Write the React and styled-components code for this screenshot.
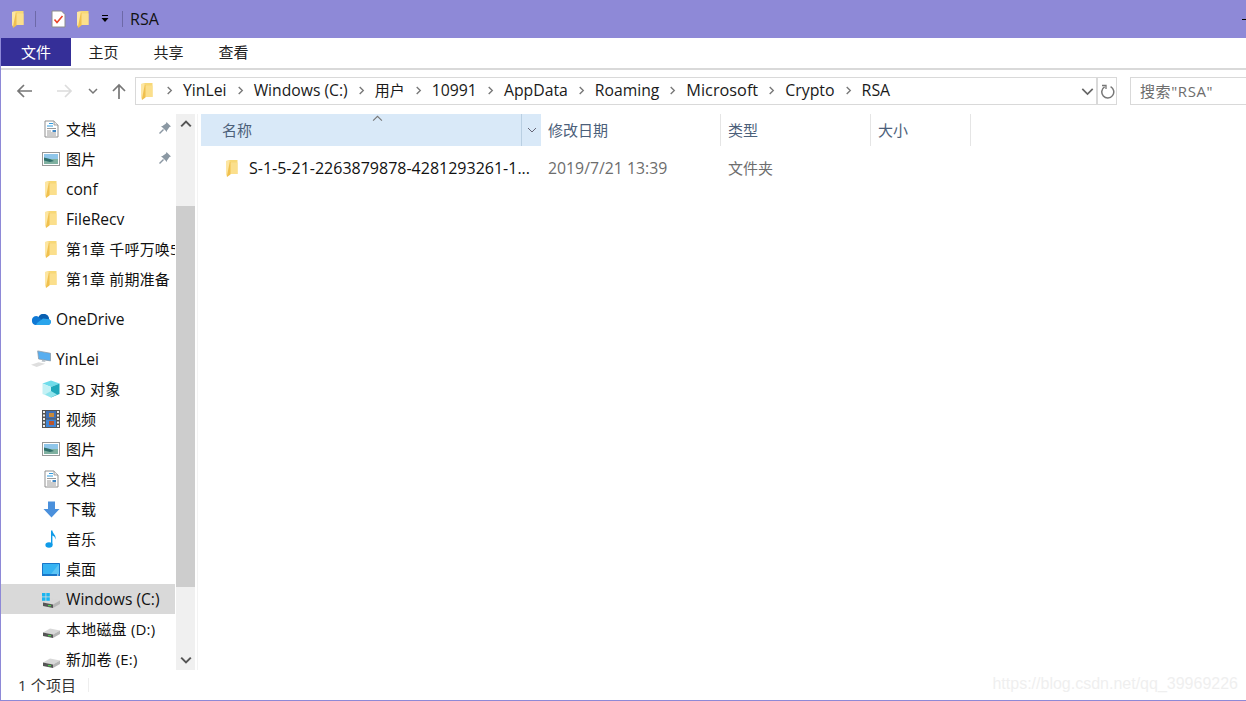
import React from 'react'
import styled, { createGlobalStyle } from 'styled-components'

const GlobalStyle = createGlobalStyle`
  html, body {
    margin: 0;
    padding: 0;
    background: #fff;
    overflow: hidden;
  }
  #root {
    height: 701px;
  }
`

const Window = styled.div`
  position: relative;
  width: 1246px;
  height: 701px;
  box-sizing: border-box;
  border-left: 1px solid #8e89d7;
  border-bottom: 1px solid #8e89d7;
  display: flex;
  flex-direction: column;
  overflow: hidden;
  color: #000;
  font-family: "Open Sans", "Noto Sans CJK SC", sans-serif;
  font-size: 15px;
`

// the CJK glyphs sit lower than the Latin ones, so nudge them up a bit
const Cjk = styled.span`
  padding-bottom: ${p => p.$lift || 2}px;
  letter-spacing: ${p => p.$track || 0}px;
  white-space: nowrap;
`

const Latin = styled.span`
  font-size: ${p => p.$size || 15.6}px;
  padding-bottom: 1px;
  white-space: nowrap;
`

const TitleBar = styled.div`
  height: 38px;
  margin-left: -1px;
  background: #8e89d7;
  display: flex;
  align-items: center;
  flex: none;
`

const TitleIcons = styled.div`
  display: flex;
  align-items: center;
  padding-left: 12px;
  width: 130px;
  box-sizing: border-box;
  flex: none;
`

const TitleSep = styled.span`
  width: 1px;
  height: 16px;
  background: #6d69a8;
  margin: 0 ${p => p.$right || 0}px 0 ${p => p.$left || 0}px;
`

const Spacer = styled.span`
  width: ${p => p.$w}px;
  flex: none;
`

const TitleText = styled.span`
  font-size: 16px;
  color: #111;
  flex: 1;
`

const Minimize = styled.span`
  width: 4px;
  height: 1px;
  background: #000;
`

const Tabs = styled.div`
  height: 32px;
  flex: none;
  display: flex;
  box-sizing: border-box;
  border-bottom: 2px solid #d9d9d9;
`

const FileTab = styled.div`
  width: 70px;
  height: 28px;
  background: #352f98;
  color: #fff;
  display: flex;
  align-items: center;
  justify-content: center;
`

const Tab = styled.div`
  width: 65px;
  height: 28px;
  display: flex;
  align-items: center;
  justify-content: center;
  color: #222;
`

const NavBar = styled.div`
  height: 44px;
  flex: none;
  display: flex;
  padding-top: 7px;
  box-sizing: border-box;
`

const NavButtons = styled.div`
  width: 134px;
  flex: none;
  display: flex;
  align-items: center;
  height: 28px;
  padding-left: 15px;
  box-sizing: border-box;
`

const AddressBox = styled.div`
  width: 962px;
  height: 28px;
  box-sizing: border-box;
  border: 1px solid #d9d9d9;
  display: flex;
  align-items: center;
  padding-left: 5px;
  flex: none;
`

const Crumbs = styled.div`
  display: flex;
  align-items: center;
  flex: 1;
  color: #1a1a1a;
  padding-left: 3px;
  padding-bottom: 1px;
`

const CrumbSep = styled.span`
  display: flex;
  margin: 0 9px;
`

const AddressEnd = styled.div`
  width: 20px;
  height: 28px;
  box-sizing: border-box;
  border: 1px solid #d9d9d9;
  display: flex;
  align-items: center;
  justify-content: center;
  flex: none;
`

const SearchBox = styled.div`
  margin-left: 13px;
  flex: 1;
  height: 28px;
  box-sizing: border-box;
  border: 1px solid #d9d9d9;
  border-right: none;
  padding-left: 9px;
  display: flex;
  align-items: center;
  color: #6d6d6d;
  white-space: nowrap;
`

const Body = styled.div`
  flex: 1;
  display: flex;
  min-height: 0;
`

const Sidebar = styled.div`
  width: 175px;
  flex: none;
  overflow: hidden;
  box-sizing: border-box;
  padding-right: 1px;
`

const NavRow = styled.div`
  height: 30px;
  display: flex;
  align-items: center;
  background: ${p => (p.$active ? '#d9d9d9' : 'transparent')};
  margin-top: ${p => p.$top || 0}px;
  padding-left: ${p => p.$indent || 40}px;
  box-sizing: border-box;
  position: relative;
  overflow: hidden;
  white-space: nowrap;
  color: #111;
`

const NavIcon = styled.span`
  width: 20px;
  height: 20px;
  margin-right: 5px;
  display: flex;
  align-items: center;
  justify-content: center;
  flex: none;
`

const Pin = styled.span`
  position: absolute;
  right: 3px;
  top: 7px;
  display: flex;
`

const ScrollBar = styled.div`
  width: 19px;
  flex: none;
  background: #f0f0f0;
  display: flex;
  flex-direction: column;
  align-items: center;
`

const ScrollBtn = styled.div`
  height: 20px;
  flex: none;
  display: flex;
  align-items: center;
  justify-content: center;
`

const ScrollTrack = styled.div`
  flex: 1;
  width: 100%;
  padding-top: 72px;
  padding-bottom: 63px;
  box-sizing: border-box;
  display: flex;
`

const ScrollThumb = styled.div`
  flex: 1;
  background: #cdcdcd;
`

const Content = styled.div`
  flex: 1;
  margin-left: 2px;
  border-left: 1px solid #f3f3f3;
  padding-left: 3px;
  position: relative;
`

const HeaderRow = styled.div`
  display: flex;
  height: 32px;
`

const NameHeader = styled.div`
  position: relative;
  width: 340px;
  background: #d9e9f8;
  display: flex;
  align-items: center;
  padding-left: 21px;
  box-sizing: border-box;
  color: #4c607a;
`

const SortCaret = styled.span`
  position: absolute;
  left: 171px;
  top: -1px;
  display: flex;
`

const HeaderMenu = styled.span`
  position: absolute;
  right: 0;
  top: 0;
  bottom: 0;
  width: 19px;
  border-left: 1px solid #b9cfe2;
  display: flex;
  align-items: center;
  justify-content: center;
`

const HeaderCell = styled.div`
  width: ${p => p.$w}px;
  box-sizing: border-box;
  padding-left: 7px;
  border-right: 1px solid #e5e5e5;
  display: flex;
  align-items: center;
  color: #4c607a;
`

const FileRow = styled.div`
  display: flex;
  align-items: center;
  height: 30px;
  margin-top: 7px;
`

const FileName = styled.div`
  width: 340px;
  box-sizing: border-box;
  padding-left: 25px;
  display: flex;
  align-items: center;
  color: #111;
  white-space: nowrap;
`

const FileMeta = styled.div`
  width: ${p => p.$w}px;
  padding-left: 7px;
  box-sizing: border-box;
  color: #6d6d6d;
  white-space: nowrap;
  display: flex;
  align-items: center;
`

const StatusBar = styled.div`
  height: 30px;
  flex: none;
  display: flex;
  align-items: center;
  padding-left: 17px;
  color: #333;
`

const StatusSep = styled.span`
  width: 1px;
  height: 14px;
  background: #eee;
  margin-left: 12px;
`

const Watermark = styled.div`
  position: absolute;
  right: 8px;
  bottom: 7px;
  font-family: "Liberation Sans", sans-serif;
  font-size: 16px;
  color: #efefef;
`

const Folder = ({ w = 12, h = 17 }) => (
  <svg width={w} height={h} viewBox="0 0 12 17">
    <path d="M0 1 L4 0 H11.5 V14 H0 Z" fill="#f7d877" />
    <path d="M4 2.5 H11.5 V14 H4 Z" fill="#fbdf8c" />
    <path d="M3.5 2 L4.5 2 V14.5 L1 17 L0.5 14 Z" fill="#f0c04e" />
    <path d="M0 1 L3.5 0.5 V3 L1 15.5 L0 14 Z" fill="#fde6a2" />
  </svg>
)

const TaskDoc = () => (
  <svg width="15" height="18" viewBox="0 0 15 18">
    <path d="M1 1 H10.5 L14 4.5 V17 H1 Z" fill="#fff" stroke="#8d8d8d" />
    <path d="M3.5 9.5 L6 12.5 L11.5 6" fill="none" stroke="#e8432b" strokeWidth="1.6" />
  </svg>
)

const QuickMenu = () => (
  <svg width="10" height="10" viewBox="0 0 10 10">
    <rect x="2" y="1" width="6" height="1" fill="#000" />
    <path d="M1.5 4 H8.5 L5 8 Z" fill="#000" />
  </svg>
)

const Arrow = ({ dir = 'left', color = '#777' }) => (
  <svg
    width="18"
    height="16"
    viewBox="0 0 18 16"
    style={dir === 'right' ? { transform: 'scaleX(-1)' } : undefined}
  >
    <path d="M16 8 H2 M8 2 L2 8 L8 14" fill="none" stroke={color} strokeWidth="1.7" />
  </svg>
)

const UpArrow = () => (
  <svg width="14" height="17" viewBox="0 0 14 17">
    <path d="M7 16 V2 M1 8 L7 2 L13 8" fill="none" stroke="#777" strokeWidth="1.7" />
  </svg>
)

const Chevron = ({ dir = 'down', color = '#777', size = 10, width = 1.5 }) => (
  <svg width={size} height={size} viewBox="0 0 10 10">
    <path
      d={
        dir === 'down'
          ? 'M1 3 L5 7 L9 3'
          : dir === 'up'
            ? 'M1 7 L5 3 L9 7'
            : 'M3 1 L7 5 L3 9'
      }
      fill="none"
      stroke={color}
      strokeWidth={width}
    />
  </svg>
)

const Refresh = () => (
  <svg width="15" height="15" viewBox="0 0 15 15">
    <path d="M4.6 2.8 A6 6 0 1 0 10.6 2.6" fill="none" stroke="#777" strokeWidth="1.5" />
    <path d="M2 1.5 H6 V5" fill="none" stroke="#777" strokeWidth="1.3" />
  </svg>
)

const PinIcon = () => (
  <svg width="14" height="14" viewBox="0 0 14 14">
    <path d="M8.5 1 L13 5.5 L11.5 6 L9 9.5 L9 11 L3 5 L4.5 5 L8 2.5 Z" fill="#8b98a3" />
    <path d="M5.5 8.5 L1.5 12.5" stroke="#8b98a3" strokeWidth="1.4" />
  </svg>
)

const DocIcon = () => (
  <svg width="15" height="18" viewBox="0 0 15 18">
    <path d="M1 1 H10 L14 5 V17 H1 Z" fill="#fff" stroke="#8f8f8f" />
    <path d="M10 1 V5 H14" fill="#e8e8e8" stroke="#8f8f8f" strokeWidth="0.8" />
    <path d="M5 3.5 H9 M3 6 H9" stroke="#2f9be0" strokeWidth="1" />
    <path d="M3 8.5 H12 M3 13 H12 M3 15 H12" stroke="#9a9a9a" strokeWidth="1" />
    <path d="M3 11 H7" stroke="#9a9a9a" strokeWidth="1" />
    <path d="M8.5 10 H12 V12 H8.5 Z" fill="#3f87c5" />
  </svg>
)

const PictureIcon = () => (
  <svg width="18" height="14" viewBox="0 0 18 14">
    <rect x="0.5" y="0.5" width="17" height="13" fill="#fff" stroke="#999" />
    <rect x="2" y="2" width="14" height="5.5" fill="#8fc6ea" />
    <rect x="2" y="7" width="14" height="5" fill="#7fb0a0" />
    <path d="M2 8.5 L2 5.5 L8 7 L12 9 L8 10 Z" fill="#2f6f6a" />
  </svg>
)

const OneDriveIcon = () => (
  <svg width="20" height="14" viewBox="0 0 20 14">
    <path d="M5 13 H17 A3 3 0 0 0 18 7.2 A5.5 5.5 0 0 0 7.6 5 A4 4 0 0 0 1 8.5 A4 4 0 0 0 5 13 Z" fill="#0f78d4" />
    <path d="M7.6 5 A5.5 5.5 0 0 1 18 7.2 L12 9 Z" fill="#0a5fb0" />
    <path d="M5 13 H17 A3 3 0 0 0 18 7.2 L12 6.5 L6 11 Z" fill="#2aa5ec" />
  </svg>
)

const PcIcon = () => (
  <svg width="21" height="18" viewBox="0 0 21 18">
    <path d="M7 0.5 L20.5 3 V11 L8 9 Z" fill="#57aef0" stroke="#8d9aa5" strokeWidth="0.8" />
    <path d="M12 10 L15 10.5 V12 L11 11.5 Z" fill="#aab4bc" />
    <path d="M0 15 L8 12.5 L15 14 L6 17.5 Z" fill="#dedede" />
  </svg>
)

const CubeIcon = () => (
  <svg width="18" height="18" viewBox="0 0 18 18">
    <path d="M9 0.5 L17.5 3.5 L9 7 L0.5 3.5 Z" fill="#6fdcea" />
    <path d="M0.5 3.5 L9 7 V17.5 L0.5 14 Z" fill="#c3f1f5" />
    <path d="M9 7 L17.5 3.5 V14 L9 17.5 Z" fill="#1ea8bb" />
    <path d="M3 14.5 L9 11 L15 14.5 L9 17.5 Z" fill="#8fe4ec" />
  </svg>
)

const VideoIcon = () => (
  <svg width="18" height="18" viewBox="0 0 18 18">
    <rect x="0" y="0" width="18" height="18" fill="#555" />
    <rect x="4" y="1" width="10" height="7.5" fill="#3f6fb5" />
    <rect x="4" y="9.5" width="10" height="7.5" fill="#3f86d8" />
    <rect x="7" y="3" width="5" height="4" fill="#c98a3a" />
    <rect x="7" y="11" width="5" height="4" fill="#b9552f" />
    {[1, 4.5, 8, 11.5, 15].map(y => (
      <g key={y}>
        <rect x="1" y={y} width="2" height="2" fill="#eee" />
        <rect x="15" y={y} width="2" height="2" fill="#eee" />
      </g>
    ))}
  </svg>
)

const DownloadIcon = () => (
  <svg width="17" height="17" viewBox="0 0 17 17">
    <path d="M5 0.5 H12 V8 H16.5 L8.5 16.5 L0.5 8 H5 Z" fill="#4a90dc" />
  </svg>
)

const MusicIcon = () => (
  <svg width="12" height="18" viewBox="0 0 12 18">
    <ellipse cx="4" cy="15" rx="3.6" ry="2.7" fill="#0f9be8" />
    <path d="M6 15 V0.5 H7.4 C7.8 4 11.5 5 10.5 9.5 C10 6.5 8.5 6 7.4 5.5 V15 Z" fill="#0f9be8" />
  </svg>
)

const DesktopIcon = () => (
  <svg width="18" height="13" viewBox="0 0 18 13">
    <rect x="0" y="0" width="18" height="13" rx="0.5" fill="#1976c9" />
    <rect x="1" y="1" width="16" height="10" fill="#36b3f2" />
    <path d="M9 11 L17 1 V11 Z" fill="#5cc4f5" />
    <rect x="15" y="11.5" width="1.5" height="1" fill="#fff" />
  </svg>
)

const DriveIcon = ({ windows }) => (
  <svg width="20" height="18" viewBox="0 0 20 18" style={{ marginTop: 4 }}>
    <path d="M2 10.5 L9 6.5 L19 8.5 L12 12.5 Z" fill="#d8d8d8" />
    <path d="M2 10.5 L12 12.5 V16 L2 14 Z" fill="#555" />
    <path d="M12 12.5 L19 8.5 V12 L12 16 Z" fill="#b5b5b5" />
    <rect x="7" y="13" width="3" height="1.2" fill="#4fd04f" />
    {windows && (
      <g fill="#19b5f1" transform="translate(1 1)">
        <rect x="0" y="0" width="3.5" height="3.5" />
        <rect x="4.3" y="0" width="3.5" height="3.5" />
        <rect x="0" y="4.3" width="3.5" height="3.5" />
        <rect x="4.3" y="4.3" width="3.5" height="3.5" />
      </g>
    )}
  </svg>
)

const navItems = [
  { label: <Cjk>文档</Cjk>, icon: <DocIcon />, pin: true },
  { label: <Cjk>图片</Cjk>, icon: <PictureIcon />, pin: true },
  { label: <Latin>conf</Latin>, icon: <Folder /> },
  { label: <Latin>FileRecv</Latin>, icon: <Folder /> },
  { label: <Cjk $track={0.2}>第1章 千呼万唤5</Cjk>, icon: <Folder /> },
  { label: <Cjk $track={0.2}>第1章 前期准备</Cjk>, icon: <Folder /> },
  { label: <Latin>OneDrive</Latin>, icon: <OneDriveIcon />, indent: 30, top: 10 },
  { label: <Latin>YinLei</Latin>, icon: <PcIcon />, indent: 30, top: 10 },
  { label: <Cjk $track={0.2}>3D 对象</Cjk>, icon: <CubeIcon /> },
  { label: <Cjk>视频</Cjk>, icon: <VideoIcon /> },
  { label: <Cjk>图片</Cjk>, icon: <PictureIcon /> },
  { label: <Cjk>文档</Cjk>, icon: <DocIcon /> },
  { label: <Cjk>下载</Cjk>, icon: <DownloadIcon /> },
  { label: <Cjk>音乐</Cjk>, icon: <MusicIcon /> },
  { label: <Cjk>桌面</Cjk>, icon: <DesktopIcon /> },
  { label: <Latin>Windows (C:)</Latin>, icon: <DriveIcon windows />, active: true },
  { label: <Cjk $track={0.2}>本地磁盘 (D:)</Cjk>, icon: <DriveIcon /> },
  { label: <Cjk $track={0.2}>新加卷 (E:)</Cjk>, icon: <DriveIcon /> },
]

const crumbs = [
  <Latin key="a" $size={15.8}>YinLei</Latin>,
  <Latin key="b" $size={15.7}>Windows (C:)</Latin>,
  <Cjk key="c">用户</Cjk>,
  <Latin key="d" $size={15.8}>10991</Latin>,
  <Latin key="e" $size={15.8}>AppData</Latin>,
  <Latin key="f" $size={15.7}>Roaming</Latin>,
  <Latin key="g" $size={16.3}>Microsoft</Latin>,
  <Latin key="h" $size={15.9}>Crypto</Latin>,
  <Latin key="i" $size={15.9}>RSA</Latin>,
]

const App = () => {
  return (
    <Window>
      <GlobalStyle />
      <TitleBar>
        <TitleIcons>
          <Folder />
          <TitleSep $left={11} $right={15} />
          <TaskDoc />
          <Spacer $w={11} />
          <Folder />
          <Spacer $w={11} />
          <QuickMenu />
          <TitleSep $left={12} />
        </TitleIcons>
        <TitleText>RSA</TitleText>
        <Minimize />
      </TitleBar>
      <Tabs>
        <FileTab><Cjk>文件</Cjk></FileTab>
        <Tab><Cjk>主页</Cjk></Tab>
        <Tab><Cjk>共享</Cjk></Tab>
        <Tab><Cjk>查看</Cjk></Tab>
      </Tabs>
      <NavBar>
        <NavButtons>
          <Arrow />
          <Spacer $w={21} />
          <Arrow dir="right" color="#dcdcdc" />
          <Spacer $w={15} />
          <Chevron />
          <Spacer $w={14} />
          <UpArrow />
        </NavButtons>
        <AddressBox>
          <Folder />
          <Crumbs>
            {crumbs.map((c, i) => (
              <React.Fragment key={i}>
                <CrumbSep>
                  <Chevron dir="right" size={9} />
                </CrumbSep>
                {c}
              </React.Fragment>
            ))}
          </Crumbs>
          <Chevron size={13} width={1.3} color="#666" />
          <Spacer $w={2} />
        </AddressBox>
        <AddressEnd>
          <Refresh />
        </AddressEnd>
        <SearchBox><Cjk $track={0.6}>搜索"RSA"</Cjk></SearchBox>
      </NavBar>
      <Body>
        <Sidebar>
          {navItems.map((item, i) => (
            <NavRow key={i} $active={item.active} $indent={item.indent} $top={item.top}>
              <NavIcon>{item.icon}</NavIcon>
              {item.label}
              {item.pin && (
                <Pin>
                  <PinIcon />
                </Pin>
              )}
            </NavRow>
          ))}
        </Sidebar>
        <ScrollBar>
          <ScrollBtn>
            <Chevron dir="up" color="#555" size={12} width={1.7} />
          </ScrollBtn>
          <ScrollTrack>
            <ScrollThumb />
          </ScrollTrack>
          <ScrollBtn>
            <Chevron color="#555" size={12} width={1.7} />
          </ScrollBtn>
        </ScrollBar>
        <Content>
          <HeaderRow>
            <NameHeader>
              <Cjk>名称</Cjk>
              <SortCaret>
                <Chevron dir="up" size={11} width={1} />
              </SortCaret>
              <HeaderMenu>
                <Chevron size={10} width={1} color="#667" />
              </HeaderMenu>
            </NameHeader>
            <HeaderCell $w={180}><Cjk>修改日期</Cjk></HeaderCell>
            <HeaderCell $w={150}><Cjk>类型</Cjk></HeaderCell>
            <HeaderCell $w={100}><Cjk>大小</Cjk></HeaderCell>
          </HeaderRow>
          <FileRow>
            <FileName>
              <Folder />
              <Spacer $w={11} />
              <Latin $size={16}>S-1-5-21-2263879878-4281293261-1...</Latin>
            </FileName>
            <FileMeta $w={180}><Latin $size={15.8}>2019/7/21 13:39</Latin></FileMeta>
            <FileMeta $w={150}><Cjk>文件夹</Cjk></FileMeta>
          </FileRow>
        </Content>
      </Body>
      <StatusBar>
        <Cjk $track={0.15}>1 个项目</Cjk>
        <StatusSep />
      </StatusBar>
      <Watermark>https://blog.csdn.net/qq_39969226</Watermark>
    </Window>
  )
}

export default App
